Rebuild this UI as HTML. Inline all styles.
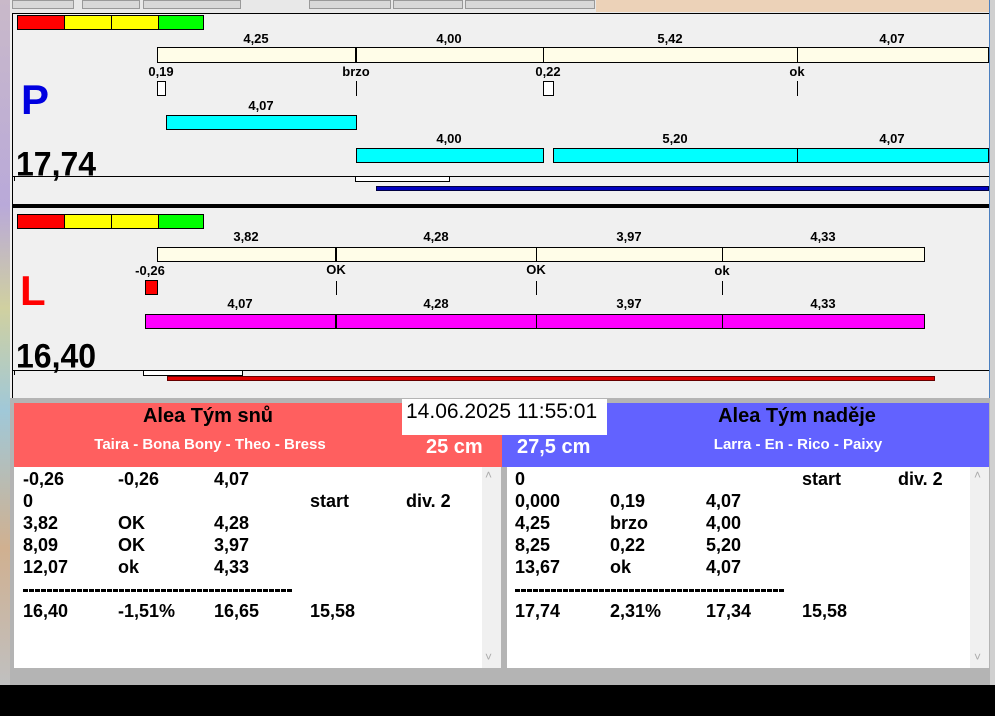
<!DOCTYPE html>
<html><head><meta charset="utf-8"><style>
*{margin:0;padding:0;box-sizing:border-box}
body{width:995px;height:716px;overflow:hidden;background:#f0f0f0;position:relative;font-family:"Liberation Sans",Arial,sans-serif}
.a{position:absolute}
.t{position:absolute;font-weight:bold;font-size:13px;transform:translateX(-50%);white-space:nowrap;line-height:13px}
.b{position:absolute;border:1px solid #000}
.v{position:absolute;width:1px;background:#000}
.r{position:absolute;font-weight:bold;font-size:18px;line-height:22px;white-space:nowrap}
.d{position:absolute;height:3px;background:repeating-linear-gradient(90deg,#000 0 5px,transparent 5px 6px)}
</style></head><body>
<div class="a" style="left:0;top:0;width:10px;height:685px;background:linear-gradient(#c9b9c9,#b9a9d9 30%,#d0d0a0 45%,#a0c8d8 60%,#d0b090 80%,#c0c0c0)"></div>
<div class="a" style="left:10px;top:0;width:985px;height:13px;background:#e8e8e8"></div>
<div class="a" style="left:596px;top:0;width:394px;height:12px;background:#ecd2b8"></div>
<div class="a" style="left:12px;top:0;width:62px;height:9px;background:#d8d8d8;border:1px solid #999"></div>
<div class="a" style="left:82px;top:0;width:58px;height:9px;background:#d8d8d8;border:1px solid #999"></div>
<div class="a" style="left:143px;top:0;width:98px;height:9px;background:#d8d8d8;border:1px solid #999"></div>
<div class="a" style="left:309px;top:0;width:82px;height:9px;background:#d8d8d8;border:1px solid #999"></div>
<div class="a" style="left:393px;top:0;width:70px;height:9px;background:#d8d8d8;border:1px solid #999"></div>
<div class="a" style="left:465px;top:0;width:130px;height:9px;background:#d8d8d8;border:1px solid #999"></div>
<div class="a" style="left:989px;top:0;width:6px;height:685px;background:#d0d0d0;border-left:1px solid #4a7fc0"></div>
<div class="a" style="left:12px;top:13px;width:977px;height:386px;background:#f0f0f0;border-left:1px solid #000;border-top:1px solid #000"></div>

<div class="b" style="left:17px;top:15px;width:48px;height:15px;background:#f00"></div>
<div class="b" style="left:64px;top:15px;width:48px;height:15px;background:#ff0"></div>
<div class="b" style="left:111px;top:15px;width:48px;height:15px;background:#ff0"></div>
<div class="b" style="left:158px;top:15px;width:46px;height:15px;background:#0f0"></div>

<div class="b" style="left:157px;top:47px;width:832px;height:16px;background:#fffde8"></div>
<div class="v" style="left:355px;top:47px;height:16px;width:2px"></div>
<div class="v" style="left:543px;top:47px;height:16px"></div>
<div class="v" style="left:797px;top:47px;height:16px"></div>
<div class="t" style="left:256px;top:32px">4,25</div>
<div class="t" style="left:449px;top:32px">4,00</div>
<div class="t" style="left:670px;top:32px">5,42</div>
<div class="t" style="left:892px;top:32px">4,07</div>
<div class="t" style="left:161px;top:65px">0,19</div>
<div class="t" style="left:356px;top:65px">brzo</div>
<div class="t" style="left:548px;top:65px">0,22</div>
<div class="t" style="left:797px;top:65px">ok</div>
<div class="b" style="left:157px;top:81px;width:9px;height:15px;background:#fff"></div>
<div class="v" style="left:356px;top:81px;height:15px"></div>
<div class="b" style="left:543px;top:81px;width:11px;height:15px;background:#fff"></div>
<div class="v" style="left:797px;top:81px;height:15px"></div>
<div class="a" style="left:21px;top:76px;font-size:42px;font-weight:bold;color:#0000e0;line-height:48px">P</div>
<div class="t" style="left:261px;top:99px">4,07</div>
<div class="b" style="left:166px;top:115px;width:191px;height:15px;background:#0ff"></div>
<div class="t" style="left:449px;top:132px">4,00</div>
<div class="t" style="left:675px;top:132px">5,20</div>
<div class="t" style="left:892px;top:132px">4,07</div>
<div class="b" style="left:356px;top:148px;width:188px;height:15px;background:#0ff"></div>
<div class="b" style="left:553px;top:148px;width:436px;height:15px;background:#0ff"></div>
<div class="v" style="left:797px;top:148px;height:15px"></div>
<div class="a" style="left:16px;top:144px;font-size:32px;font-weight:bold;line-height:36px;transform:scaleY(1.08);transform-origin:top left">17,74</div>
<div class="a" style="left:12px;top:176px;width:977px;height:1px;background:#000"></div>
<div class="v" style="left:14px;top:176px;height:5px"></div>
<div class="b" style="left:355px;top:176px;width:95px;height:6px;background:#fff"></div>
<div class="a" style="left:376px;top:186px;width:613px;height:5px;background:#0000c0;border:1px solid #000040"></div>
<div class="a" style="left:12px;top:204px;width:977px;height:4px;background:#000"></div>

<div class="b" style="left:17px;top:214px;width:48px;height:15px;background:#f00"></div>
<div class="b" style="left:64px;top:214px;width:48px;height:15px;background:#ff0"></div>
<div class="b" style="left:111px;top:214px;width:48px;height:15px;background:#ff0"></div>
<div class="b" style="left:158px;top:214px;width:46px;height:15px;background:#0f0"></div>
<div class="b" style="left:157px;top:247px;width:768px;height:15px;background:#fffde8"></div>
<div class="v" style="left:335px;top:247px;height:15px;width:2px"></div>
<div class="v" style="left:536px;top:247px;height:15px"></div>
<div class="v" style="left:722px;top:247px;height:15px"></div>
<div class="t" style="left:246px;top:230px">3,82</div>
<div class="t" style="left:436px;top:230px">4,28</div>
<div class="t" style="left:629px;top:230px">3,97</div>
<div class="t" style="left:823px;top:230px">4,33</div>
<div class="t" style="left:150px;top:264px">-0,26</div>
<div class="t" style="left:336px;top:263px">OK</div>
<div class="t" style="left:536px;top:263px">OK</div>
<div class="t" style="left:722px;top:264px">ok</div>
<div class="b" style="left:145px;top:280px;width:13px;height:15px;background:#f00"></div>
<div class="v" style="left:336px;top:281px;height:14px"></div>
<div class="v" style="left:536px;top:281px;height:14px"></div>
<div class="v" style="left:722px;top:281px;height:14px"></div>
<div class="a" style="left:20px;top:268px;font-size:42px;font-weight:bold;color:#f00;line-height:46px">L</div>
<div class="t" style="left:240px;top:297px">4,07</div>
<div class="t" style="left:436px;top:297px">4,28</div>
<div class="t" style="left:629px;top:297px">3,97</div>
<div class="t" style="left:823px;top:297px">4,33</div>
<div class="b" style="left:145px;top:314px;width:780px;height:15px;background:#f0f"></div>
<div class="v" style="left:335px;top:314px;height:15px;width:2px"></div>
<div class="v" style="left:536px;top:314px;height:15px"></div>
<div class="v" style="left:722px;top:314px;height:15px"></div>
<div class="a" style="left:16px;top:336px;font-size:32px;font-weight:bold;line-height:36px;transform:scaleY(1.08);transform-origin:top left">16,40</div>
<div class="a" style="left:12px;top:370px;width:977px;height:1px;background:#000"></div>
<div class="v" style="left:14px;top:370px;height:5px"></div>
<div class="b" style="left:143px;top:370px;width:100px;height:6px;background:#fff"></div>
<div class="a" style="left:167px;top:376px;width:768px;height:5px;background:#e00000;border:1px solid #600"></div>

<div class="a" style="left:10px;top:398px;width:980px;height:287px;background:#b4b4b4"></div>
<div class="a" style="left:14px;top:403px;width:489px;height:64px;background:#ff5f5f"></div>
<div class="a" style="left:502px;top:403px;width:487px;height:64px;background:#6262ff"></div>
<div class="a" style="left:402px;top:399px;width:205px;height:36px;background:#fff"></div>
<div class="a" style="left:406px;top:400px;font-size:21px;line-height:24px">14.06.2025 11:55:01</div>
<div class="t" style="left:208px;top:406px;font-size:20px;line-height:20px">Alea Tým snů</div>
<div class="t" style="left:210px;top:437px;font-size:15px;line-height:15px;color:#fff">Taira - Bona Bony - Theo - Bress</div>
<div class="a" style="left:426px;top:436px;font-size:20px;font-weight:bold;color:#fff;line-height:22px">25 cm</div>
<div class="t" style="left:797px;top:406px;font-size:20px;line-height:20px">Alea Tým naděje</div>
<div class="t" style="left:798px;top:437px;font-size:15px;line-height:15px;color:#fff">Larra - En - Rico - Paixy</div>
<div class="a" style="left:517px;top:436px;font-size:20px;font-weight:bold;color:#fff;line-height:22px">27,5 cm</div>

<div class="a" style="left:14px;top:467px;width:487px;height:201px;background:#fff"></div>
<div class="a" style="left:482px;top:467px;width:19px;height:201px;background:#f0f0f0"></div>
<div class="a" style="left:507px;top:467px;width:482px;height:201px;background:#fff"></div>
<div class="a" style="left:970px;top:467px;width:19px;height:201px;background:#f0f0f0"></div>
<div class="a" style="left:485px;top:468px;color:#aaa;font-size:12px">˄</div>
<div class="a" style="left:485px;top:650px;color:#aaa;font-size:12px">˅</div>
<div class="a" style="left:974px;top:468px;color:#aaa;font-size:12px">˄</div>
<div class="a" style="left:974px;top:650px;color:#aaa;font-size:12px">˅</div>

<div class="r" style="left:23px;top:468px">-0,26</div><div class="r" style="left:118px;top:468px">-0,26</div><div class="r" style="left:214px;top:468px">4,07</div>
<div class="r" style="left:23px;top:490px">0</div><div class="r" style="left:310px;top:490px">start</div><div class="r" style="left:406px;top:490px">div. 2</div>
<div class="r" style="left:23px;top:512px">3,82</div><div class="r" style="left:118px;top:512px">OK</div><div class="r" style="left:214px;top:512px">4,28</div>
<div class="r" style="left:23px;top:534px">8,09</div><div class="r" style="left:118px;top:534px">OK</div><div class="r" style="left:214px;top:534px">3,97</div>
<div class="r" style="left:23px;top:556px">12,07</div><div class="r" style="left:118px;top:556px">ok</div><div class="r" style="left:214px;top:556px">4,33</div>
<div class="d" style="left:23px;top:589px;width:269px"></div>
<div class="r" style="left:23px;top:600px">16,40</div><div class="r" style="left:118px;top:600px">-1,51%</div><div class="r" style="left:214px;top:600px">16,65</div><div class="r" style="left:310px;top:600px">15,58</div>

<div class="r" style="left:515px;top:468px">0</div><div class="r" style="left:802px;top:468px">start</div><div class="r" style="left:898px;top:468px">div. 2</div>
<div class="r" style="left:515px;top:490px">0,000</div><div class="r" style="left:610px;top:490px">0,19</div><div class="r" style="left:706px;top:490px">4,07</div>
<div class="r" style="left:515px;top:512px">4,25</div><div class="r" style="left:610px;top:512px">brzo</div><div class="r" style="left:706px;top:512px">4,00</div>
<div class="r" style="left:515px;top:534px">8,25</div><div class="r" style="left:610px;top:534px">0,22</div><div class="r" style="left:706px;top:534px">5,20</div>
<div class="r" style="left:515px;top:556px">13,67</div><div class="r" style="left:610px;top:556px">ok</div><div class="r" style="left:706px;top:556px">4,07</div>
<div class="d" style="left:515px;top:589px;width:269px"></div>
<div class="r" style="left:515px;top:600px">17,74</div><div class="r" style="left:610px;top:600px">2,31%</div><div class="r" style="left:706px;top:600px">17,34</div><div class="r" style="left:802px;top:600px">15,58</div>

<div class="a" style="left:0;top:685px;width:995px;height:31px;background:#000"></div>
</body></html>
